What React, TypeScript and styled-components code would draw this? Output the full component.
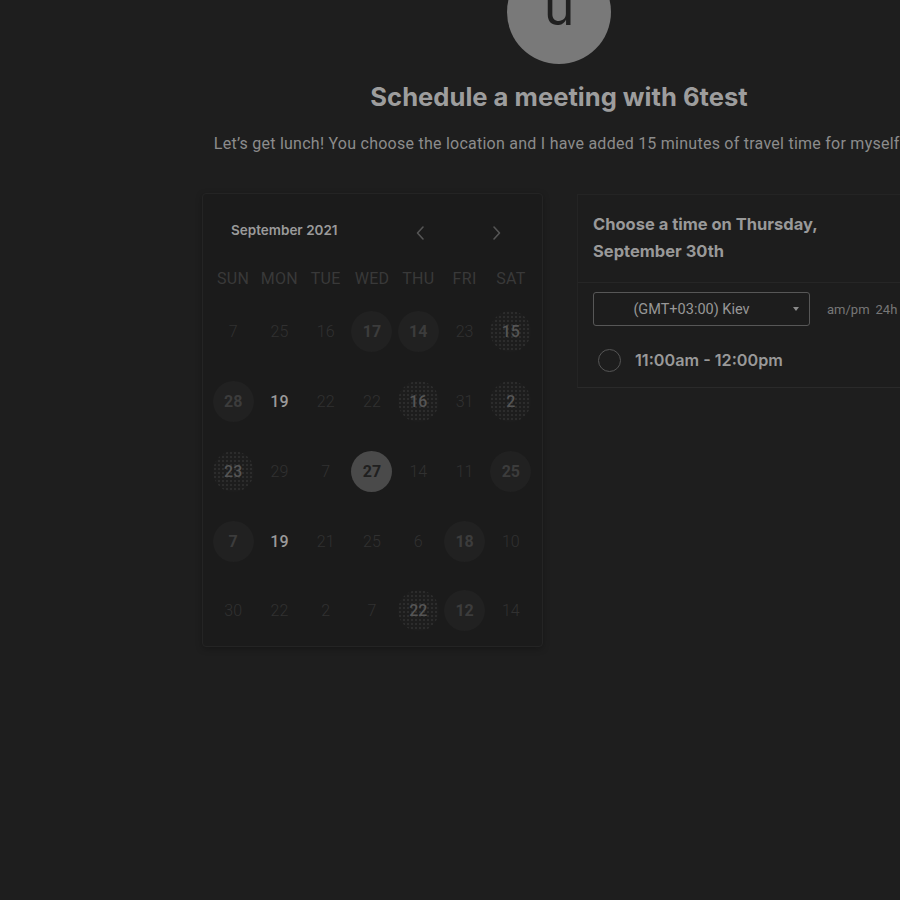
import React from "react";
import styled, { createGlobalStyle, css } from "styled-components";

const Global = createGlobalStyle`
  html, body {
    margin: 0;
    padding: 0;
    background: #1e1e1e;
    overflow: hidden;
    width: 900px;
    height: 900px;
  }
  body {
    font-family: Roboto, "Noto Sans", sans-serif;
  }
`;

const Page = styled.div`
  width: 714px;
  margin-left: 202px;
  display: flex;
  flex-direction: column;
  align-items: center;
`;

const Avatar = styled.div`
  width: 104px;
  height: 104px;
  margin-top: -40px;
  border-radius: 50%;
  background: #797979;
  color: #202020;
  font-family: Inter, sans-serif;
  font-size: 52px;
  line-height: 1;
  display: flex;
  align-items: center;
  justify-content: center;
  padding-bottom: 10px;
  box-sizing: border-box;
`;

const Title = styled.h1`
  margin: 18px 0 0;
  font-family: Inter, sans-serif;
  font-weight: 700;
  font-size: 25.6px;
  line-height: 30px;
  color: #9d9d9d;
  letter-spacing: 0;
`;

const Description = styled.p`
  margin: 20px 0 0;
  font-family: Roboto, sans-serif;
  font-size: 16px;
  line-height: 24px;
  letter-spacing: 0.25px;
  color: #8c8c8c;
  white-space: nowrap;
`;

const Columns = styled.div`
  align-self: stretch;
  display: flex;
  align-items: flex-start;
  gap: 34px;
  margin-top: 37px;
`;

const CalendarPanel = styled.div`
  width: 341px;
  box-sizing: border-box;
  padding-top: 20px;
  background: #1b1b1b;
  border: 1px solid #242424;
  border-radius: 4px;
  box-shadow: 0 2px 6px rgba(0, 0, 0, 0.25);
`;

const CalHeader = styled.div`
  height: 32px;
  display: flex;
  align-items: center;
  padding: 0 29px 0 28px;
`;

const MonthLabel = styled.div`
  flex: 1;
  font-family: Inter, sans-serif;
  font-weight: 600;
  font-size: 13.5px;
  color: #9a9a9a;
`;

const NavGroup = styled.div`
  display: flex;
  gap: 45px;
`;

const NavButton = styled.button`
  width: 32px;
  height: 32px;
  padding: 0;
  border: none;
  background: transparent;
  display: flex;
  align-items: center;
  justify-content: center;
  margin-top: 6px;
`;

const Grid = styled.div`
  display: grid;
  grid-template-columns: repeat(7, 1fr);
  margin: 0 8px 0 7px;
`;

const DayName = styled.div`
  height: 24px;
  margin-top: 20px;
  margin-bottom: 7px;
  display: flex;
  align-items: center;
  justify-content: center;
  font-size: 16px;
  color: #393939;
  letter-spacing: 0.3px;
`;

type Kind = "dim" | "bright" | "circle" | "noise" | "selected";

const Cell = styled.div`
  height: 69.75px;
  display: flex;
  align-items: center;
  justify-content: center;
`;

const DateDot = styled.div<{ $kind: Kind }>`
  width: 41px;
  height: 41px;
  border-radius: 50%;
  display: flex;
  align-items: center;
  justify-content: center;
  font-size: 16px;
  ${({ $kind }) => {
    switch ($kind) {
      case "dim":
        return css`
          color: #313131;
          font-weight: 300;
        `;
      case "bright":
        return css`
          color: #9a9a9a;
          font-weight: 500;
        `;
      case "circle":
        return css`
          background: #212121;
          color: #3c3c3c;
          font-weight: 700;
        `;
      case "noise":
        return css`
          background-color: #1d1d1d;
          background-image: radial-gradient(#2c2c2c 0.9px, transparent 1.3px);
          background-size: 4px 4px;
          color: #555;
          font-weight: 500;
        `;
      case "selected":
        return css`
          background: #4a4a4a;
          color: #202020;
          font-weight: 700;
        `;
    }
  }}
`;

const TimePanel = styled.div`
  flex: 1;
  margin-top: 1px;
  border-left: 1px solid #242424;
  border-top: 1px solid #242424;
  border-bottom: 1px solid #2a2a2a;
  background: #1d1d1d;
`;

const TimeHeader = styled.div`
  padding: 16px 16px 17px 15px;
  border-bottom: 1px solid #262626;
  font-family: Inter, sans-serif;
  font-weight: 700;
  font-size: 16.5px;
  line-height: 27px;
  color: #999;
`;

const ZoneRow = styled.div`
  display: flex;
  align-items: center;
  gap: 17px;
  padding: 9px 0 0 15px;
`;

const ZoneSelect = styled.div`
  width: 217px;
  height: 34px;
  box-sizing: border-box;
  border: 1px solid #575757;
  border-radius: 3px;
  display: flex;
  align-items: center;
  padding: 0 10px 0 0;
`;

const ZoneText = styled.span`
  flex: 1;
  margin-right: 4px;
  text-align: center;
  font-size: 14.5px;
  color: #979797;
`;

const Caret = styled.span`
  width: 0;
  height: 0;
  border-left: 3.5px solid transparent;
  border-right: 3.5px solid transparent;
  border-top: 4px solid #8a8a8a;
`;

const FormatToggle = styled.div`
  display: flex;
  gap: 6px;
  font-size: 13px;
  color: #777;
  white-space: nowrap;
`;

const Slot = styled.div`
  height: 40px;
  margin-top: 14px;
  margin-bottom: 7px;
  display: flex;
  align-items: center;
  gap: 14px;
  padding-left: 20px;
`;

const Radio = styled.span`
  width: 23px;
  height: 23px;
  box-sizing: border-box;
  border: 1.5px solid #555;
  border-radius: 50%;
`;

const SlotLabel = styled.span`
  font-family: Inter, sans-serif;
  font-weight: 600;
  font-size: 16.2px;
  color: #999;
`;

const Chevron = ({ dir }: { dir: "left" | "right" }) => (
  <svg width="10" height="16" viewBox="0 0 10 16" fill="none">
    <path
      d={dir === "left" ? "M8 2 L2.5 8 L8 14" : "M2 2 L7.5 8 L2 14"}
      stroke="#555"
      strokeWidth="1.6"
      strokeLinecap="round"
      strokeLinejoin="round"
    />
  </svg>
);

const dayNames = ["SUN", "MON", "TUE", "WED", "THU", "FRI", "SAT"];

const rows: [string, Kind][][] = [
  [["7", "dim"], ["25", "dim"], ["16", "dim"], ["17", "circle"], ["14", "circle"], ["23", "dim"], ["15", "noise"]],
  [["28", "circle"], ["19", "bright"], ["22", "dim"], ["22", "dim"], ["16", "noise"], ["31", "dim"], ["2", "noise"]],
  [["23", "noise"], ["29", "dim"], ["7", "dim"], ["27", "selected"], ["14", "dim"], ["11", "dim"], ["25", "circle"]],
  [["7", "circle"], ["19", "bright"], ["21", "dim"], ["25", "dim"], ["6", "dim"], ["18", "circle"], ["10", "dim"]],
  [["30", "dim"], ["22", "dim"], ["2", "dim"], ["7", "dim"], ["22", "noise"], ["12", "circle"], ["14", "dim"]],
];

export default function App() {
  return (
    <>
      <Global />
      <Page>
        <Avatar>u</Avatar>
        <Title>Schedule a meeting with 6test</Title>
        <Description>
          Let’s get lunch! You choose the location and I have added 15 minutes of travel time for myself.
        </Description>
        <Columns>
          <CalendarPanel>
            <CalHeader>
              <MonthLabel>September 2021</MonthLabel>
              <NavGroup>
                <NavButton aria-label="Previous month">
                  <Chevron dir="left" />
                </NavButton>
                <NavButton aria-label="Next month">
                  <Chevron dir="right" />
                </NavButton>
              </NavGroup>
            </CalHeader>
            <Grid>
              {dayNames.map((d) => (
                <DayName key={d}>{d}</DayName>
              ))}
              {rows.flat().map(([n, k], i) => (
                <Cell key={i}>
                  <DateDot $kind={k}>{n}</DateDot>
                </Cell>
              ))}
            </Grid>
          </CalendarPanel>
          <TimePanel>
            <TimeHeader>
              Choose a time on Thursday,
              <br />
              September 30th
            </TimeHeader>
            <ZoneRow>
              <ZoneSelect>
                <ZoneText>(GMT+03:00) Kiev</ZoneText>
                <Caret />
              </ZoneSelect>
              <FormatToggle>
                <span>am/pm</span>
                <span>24h</span>
              </FormatToggle>
            </ZoneRow>
            <Slot>
              <Radio />
              <SlotLabel>11:00am - 12:00pm</SlotLabel>
            </Slot>
          </TimePanel>
        </Columns>
      </Page>
    </>
  );
}
